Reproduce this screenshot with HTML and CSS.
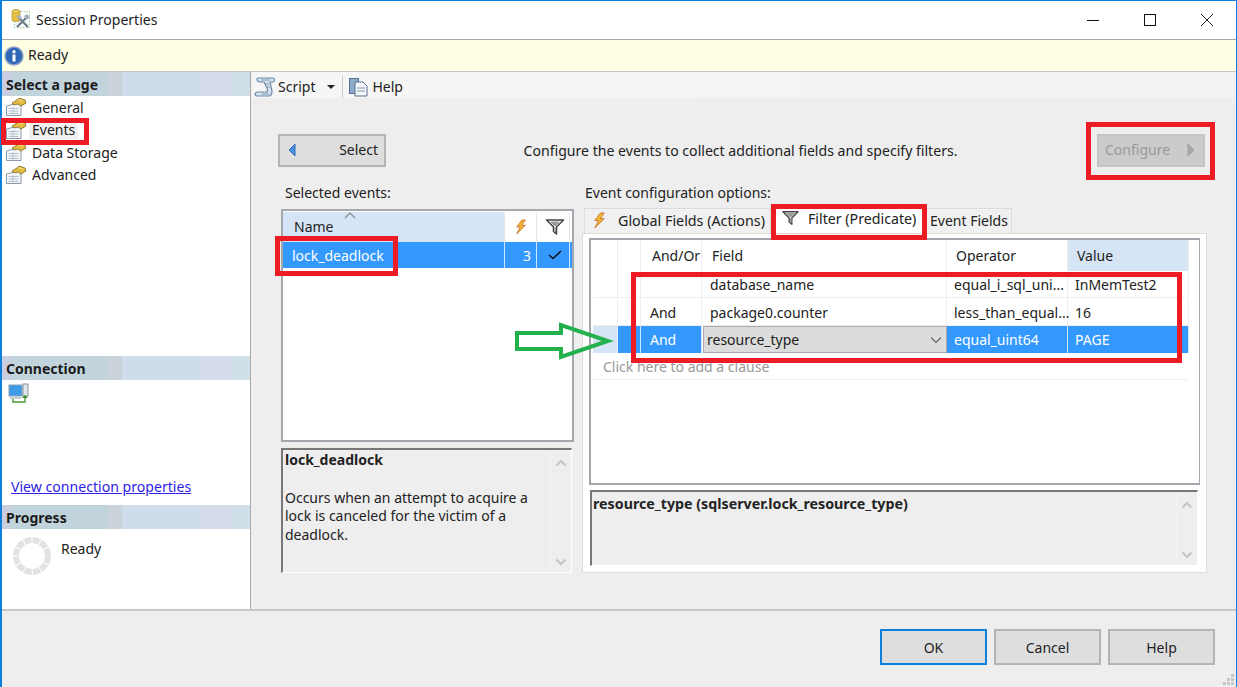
FILE: index.html
```html
<!DOCTYPE html>
<html lang="en">
<head>
<meta charset="utf-8">
<title>Session Properties</title>
<link rel="stylesheet" href="styles.css">
</head>
<body>
<svg class="defs" width="0" height="0" aria-hidden="true">
  <symbol id="page" viewBox="0 0 22 20">
    <path d="M1.500 9 L13 6 L16 9 V18.500 H1.500 Z" fill="#f3f6f9" stroke="#8a98a6"/>
    <path d="M3.500 11.500h10M3.500 14h10M3.500 16.500h10M8 10v7.500" stroke="#b4c0cc" fill="none"/>
    <path d="M7 6 L12 3 L14 1 L20 3 L21 6 L16 9 L13 7 L9 8 Z" fill="#e3bb3e" stroke="#7c6a2a" stroke-width=".8"/>
    <path d="M13 2.500 L18 4" stroke="#f7e38c"/>
  </symbol>
  <symbol id="bolt" viewBox="0 0 16 18">
    <path d="M9 1 L3 9 H7 L3 17 L13 7 H9 L13 1 Z" fill="#f2b632" stroke="#c9763a" stroke-width="1"/>
  </symbol>
  <symbol id="funnel" viewBox="0 0 20 18">
    <path d="M1.500 2 H18.500 L11.500 9 V16 L8.500 13.500 V9 Z" fill="#fff" stroke="#444" stroke-width="1.500" stroke-linejoin="round"/>
    <path d="M9.500 9 H11 V14.500 L9.500 13.500 Z M5 3.500 H15 L11 8 H9 Z" fill="#999"/>
  </symbol>
  <symbol id="chev-up" viewBox="0 0 12 8"><path d="M1.500 6.500 L6 2 L10.500 6.500" fill="none" stroke="#c4c4c4" stroke-width="2"/></symbol>
  <symbol id="chev-down" viewBox="0 0 12 8"><path d="M1.500 1.500 L6 6 L10.500 1.500" fill="none" stroke="#c4c4c4" stroke-width="2"/></symbol>
</svg>

<div class="window">
  <header class="titlebar">
    <svg class="app-icon" viewBox="0 0 20 20" width="20" height="20">
      <rect x="3.500" y="2.500" width="15" height="16" fill="none" stroke="#8fd08f" stroke-dasharray="1.500 1.500"/>
      <path d="M1 2 a4 1.500 0 0 1 8 0 V11 a4 1.500 0 0 1 -8 0 Z" fill="#e6bf45" stroke="#a68a2a" stroke-width=".6"/>
      <path d="M1 2 a4 1.500 0 0 0 8 0" fill="#f6e08a" stroke="#a68a2a" stroke-width=".5"/>
      <path d="M6 18 L15 9 M8 9 L17 18" stroke="#6f7f8f" stroke-width="2.400"/>
      <path d="M13 7 L16 5 L19 8 L16 11 Z M5 7 L8 6 L11 9 L9 11 Z" fill="#a3b0bd"/>
    </svg>
    <span class="title-text">Session Properties</span>
    <div class="window-controls">
      <svg width="14" height="14" viewBox="0 0 14 14"><path d="M1 7.500H13" stroke="#111" fill="none"/></svg>
      <svg width="14" height="14" viewBox="0 0 14 14"><rect x="1.500" y="1.500" width="11" height="11" fill="none" stroke="#111"/></svg>
      <svg width="14" height="14" viewBox="0 0 14 14"><path d="M1 1L13 13M13 1L1 13" stroke="#222" fill="none"/></svg>
    </div>
  </header>

  <div class="statusbar">
    <svg width="20" height="20" viewBox="0 0 20 20">
      <circle cx="10" cy="10" r="9" fill="#2f66b8" stroke="#8ea4c4" stroke-width="1.500"/>
      <rect x="8.500" y="8.500" width="3" height="7" fill="#fff"/>
      <circle cx="10" cy="5.800" r="1.700" fill="#fff"/>
    </svg>
    <span>Ready</span>
  </div>

  <div class="body">
    <aside class="sidebar">
      <section class="side-pages">
        <h2 class="side-head">Select a page</h2>
        <ul class="page-list">
          <li><svg class="page-icon"><use href="#page"/></svg><span>General</span></li>
          <li><svg class="page-icon"><use href="#page"/></svg><span class="current">Events</span></li>
          <li><svg class="page-icon"><use href="#page"/></svg><span>Data Storage</span></li>
          <li><svg class="page-icon"><use href="#page"/></svg><span>Advanced</span></li>
        </ul>
      </section>
      <section class="side-connection">
        <h2 class="side-head">Connection</h2>
        <div class="conn-body">
          <svg width="22" height="22" viewBox="0 0 22 22">
            <rect x="1" y="2" width="13" height="11" fill="#3d9be8" stroke="#8aa0b8"/>
            <rect x="15" y="1" width="5" height="12" fill="#dfe5ea" stroke="#8a949e"/>
            <rect x="2" y="13" width="11" height="3" fill="#c4ccd4"/>
            <path d="M5 16 V19 H17 V14" fill="none" stroke="#4b9a33" stroke-width="1.400"/>
            <path d="M14 15 L17 12 L20 15 Z" fill="#2f8a22"/>
          </svg>
          <a class="conn-link" href="#">View connection properties</a>
        </div>
      </section>
      <section class="side-progress">
        <h2 class="side-head">Progress</h2>
        <div class="progress-body">
          <svg width="38" height="38" viewBox="0 0 38 38"><circle cx="19" cy="19" r="16" fill="none" stroke="#e2e2e2" stroke-width="6" stroke-dasharray="7.300 1.080"/></svg>
          <span>Ready</span>
        </div>
      </section>
    </aside>

    <main class="main">
      <div class="toolbar">
        <svg width="22" height="21" viewBox="0 0 22 21">
          <path d="M4 2 H19 C21 2 21 5 19 6 H16 L18 15 C18 18 17 20 15 20 H3 C1 20 0 17 3 16 H13 C14 14 13 11 12 10 L10 6 H6 C3 6 2 2 4 2Z" fill="#d9e3ee" stroke="#6d89a8" stroke-width="1.200"/>
          <path d="M7 4H16M11 8H15M12 11H16M8 18H15" stroke="#7e97b0"/>
        </svg>
        <span class="tool-label">Script</span>
        <span class="caret"></span>
        <span class="tool-sep"></span>
        <svg width="21" height="21" viewBox="0 0 21 21">
          <rect x="1.500" y="2.500" width="9" height="15" fill="#8fa9c8" stroke="#55708e"/>
          <path d="M7 6 H15 L19 10 V20 H7 Z" fill="#f5f7fa" stroke="#55708e"/>
          <path d="M9 12h8M9 15h8" stroke="#7e97b0"/>
        </svg>
        <span class="tool-label tool-help">Help</span>
      </div>

      <div class="content">
        <div class="action-row">
          <button class="btn btn-wizard btn-back" type="button">
            <svg width="8" height="14" viewBox="0 0 8 14"><path d="M7 1 L1 7 L7 13 Z" fill="#4a90e2" stroke="#2c6fc0"/></svg>
            <span>Select</span>
          </button>
          <p class="action-text">Configure the events to collect additional fields and specify filters.</p>
          <button class="btn btn-wizard btn-next" type="button" disabled>
            <span>Configure</span>
            <svg width="8" height="14" viewBox="0 0 8 14"><path d="M1 1 L7 7 L1 13 Z" fill="#a8a8a8" stroke="#a0a0a0"/></svg>
          </button>
        </div>

        <div class="columns">
          <div class="col-left">
            <div class="col-label">Selected events:</div>
            <div class="event-list">
              <div class="event-row event-head">
                <div class="cell cell-name sorted">
                  <svg class="sort-mark" width="12" height="7" viewBox="0 0 12 7"><path d="M1 6 L6 1 L11 6" fill="none" stroke="#888" stroke-width="1.200"/></svg>
                  Name
                </div>
                <div class="cell cell-icon"><svg width="14" height="18"><use href="#bolt"/></svg></div>
                <div class="cell cell-icon cell-last"><svg width="20" height="18"><use href="#funnel"/></svg></div>
              </div>
              <div class="event-row event-selected">
                <div class="cell cell-name">lock_deadlock</div>
                <div class="cell cell-count">3</div>
                <div class="cell cell-icon cell-last"><svg width="14" height="10" viewBox="0 0 14 10"><path d="M1 5 L5 8.500 L13 1" fill="none" stroke="#111" stroke-width="1.500"/></svg></div>
              </div>
            </div>
            <div class="desc-box desc-left">
              <div class="desc-text">
                <strong>lock_deadlock</strong>
                <p>Occurs when an attempt to acquire a lock is canceled for the victim of a deadlock.</p>
              </div>
              <div class="desc-scroll">
                <svg width="12" height="8"><use href="#chev-up"/></svg>
                <svg width="12" height="8"><use href="#chev-down"/></svg>
              </div>
            </div>
          </div>

          <div class="col-right">
            <div class="col-label">Event configuration options:</div>
            <div class="tabs">
              <div class="tab tab-global"><svg width="15" height="17"><use href="#bolt"/></svg>Global Fields (Actions)</div>
              <div class="tab tab-active"><svg width="19" height="16"><use href="#funnel"/></svg>Filter (Predicate)</div>
              <div class="tab tab-plain">Event Fields</div>
            </div>
            <div class="tab-panel">
              <div class="grid-box">
                <div class="grid-row grid-head">
                  <div class="gc"></div><div class="gc"></div>
                  <div class="gc gc-andor">And/Or</div><div class="gc">Field</div><div class="gc gc-op">Operator</div><div class="gc gc-sorted">Value</div>
                </div>
                <div class="grid-row">
                  <div class="gc"></div><div class="gc"></div>
                  <div class="gc"></div><div class="gc gc-field">database_name</div><div class="gc gc-opv">equal_i_sql_uni...</div><div class="gc">InMemTest2</div>
                </div>
                <div class="grid-row grid-row-tall">
                  <div class="gc"></div><div class="gc"></div>
                  <div class="gc gc-and">And</div><div class="gc gc-field">package0.counter</div><div class="gc gc-opv">less_than_equal...</div><div class="gc">16</div>
                </div>
                <div class="grid-row grid-selected">
                  <div class="gc gc-rowmark"></div><div class="gc gc-sel"></div>
                  <div class="gc gc-sel gc-and">And</div>
                  <div class="gc gc-combo"><span>resource_type</span><svg width="12" height="8" viewBox="0 0 12 8"><path d="M1 1.500 L6 6.500 L11 1.500" fill="none" stroke="#666" stroke-width="1.200"/></svg></div>
                  <div class="gc gc-sel gc-opv">equal_uint64</div><div class="gc gc-sel">PAGE</div>
                </div>
                <div class="grid-add">Click here to add a clause</div>
              </div>
              <div class="desc-box desc-right">
                <div class="desc-text"><strong>resource_type (sqlserver.lock_resource_type)</strong></div>
                <div class="desc-scroll">
                  <svg width="12" height="8"><use href="#chev-up"/></svg>
                  <svg width="12" height="8"><use href="#chev-down"/></svg>
                </div>
              </div>
            </div>
          </div>
        </div>
      </div>
    </main>
  </div>

  <footer class="footer">
    <button class="btn btn-foot btn-default" type="button">OK</button>
    <button class="btn btn-foot" type="button">Cancel</button>
    <button class="btn btn-foot" type="button">Help</button>
    <svg class="grip" width="12" height="12" viewBox="0 0 12 12"><path d="M9 0h3v3H9zM5 4h3v3H5zM9 4h3v3H9zM1 8h3v3H1zM5 8h3v3H5zM9 8h3v3H9z" fill="#c6c6c6"/></svg>
  </footer>
</div>

<div class="mark mark-events"></div>
<div class="mark mark-event-row"></div>
<div class="mark mark-tab"></div>
<div class="mark mark-config"></div>
<div class="mark mark-rows"></div>
<svg class="green-arrow" width="100" height="38" viewBox="0 0 100 38">
  <path d="M3 11 H47 V3 L94 19 L47 35 V27 H3 Z" fill="none" stroke="#22b14c" stroke-width="4"/>
</svg>
</body>
</html>
```
FILE: styles.css
```css
* { box-sizing: border-box; }
html, body { margin: 0; padding: 0; }
body {
  width: 1237px; height: 687px; overflow: hidden; position: relative;
  font-family: "Noto Sans", sans-serif; font-size: 14px; color: #222; background: #eee;
}
.defs { position: absolute; }
.window {
  width: 1237px; height: 687px; display: flex; flex-direction: column; position: relative;
  border: 1px solid #0f7fdc; border-width: 1px 1px 0 2px; background: #eee;
}
.titlebar { height: 38px; flex: none; display: flex; align-items: center; padding: 0 0 2px 9px; background: #fff; }
.title-text { margin-left: 5px; font-size: 14px; color: #222; }
.window-controls { margin-left: auto; display: flex; gap: 43px; padding: 0 22px 0 0; position: relative; top: 1px; }
.statusbar {
  height: 33px; flex: none; display: flex; align-items: center; gap: 4px; padding: 0 0 2px 2px;
  background: #ffffe4; border-top: 1px solid #a8a8a8; border-bottom: 1px solid #c8c8c8;
}
.statusbar svg { position: relative; top: 1px; }
.body { height: 539px; flex: none; display: flex; border-bottom: 2px solid #c9c9c9; }
.sidebar {
  width: 249px; flex: none; background: #fff; border-right: 1px solid #a9a9a9;
  display: flex; flex-direction: column;
}
.side-head {
  margin: 0; height: 24px; padding: 1px 0 0 4px; font-size: 14px; font-weight: 700; line-height: 24px; color: #1c1c1c;
  background: linear-gradient(90deg, #c9cfe0 0 9px, #c1d4dc 9px 106px, #c9d3d9 106px 120px, #cedde9 120px 198px, #d6dcea 198px 230px, #d1e0e8 230px);
}
.side-pages { height: 284px; flex: none; }
.page-list { list-style: none; margin: 0; padding: 0 0 0 3px; }
.page-list li { height: 22.500px; display: flex; align-items: center; gap: 5px; }
.page-icon { width: 22px; height: 20px; }
.current { background: #f0f0f0; padding: 0 3px; margin-left: -3px; }
.side-connection { height: 149px; flex: none; }
.conn-body { height: 125px; position: relative; padding: 3px 0 0 6px; display: flex; flex-direction: column; }
.conn-link { margin-top: auto; margin-left: 3px; margin-bottom: 9px; color: #2f22e8; font-size: 14.100px; }
.side-progress { flex: 1; }
.progress-body { display: flex; gap: 10px; padding: 8px 0 0 11px; align-items: flex-start; }
.progress-body span { margin-top: 2px; }

.main { flex: 1; min-width: 0; display: flex; flex-direction: column; }
.toolbar {
  height: 26px; flex: none; display: flex; align-items: center; padding: 3px 0 0 2px; margin-left: 1px;
  background: linear-gradient(90deg, #f6f6f6, #f2f2f2);
}
.tool-label { margin-left: 2px; }
.tool-help { margin-left: 3px; }
.caret { width: 0; height: 0; margin-left: 12px; border: 4px solid transparent; border-top-color: #222; border-bottom: 0; }
.tool-sep { width: 1px; height: 22px; margin: 0 5px 0 7px; background: #ccc; }
.content { flex: 1; padding: 36px 0 0 27px; }
.action-row { display: flex; align-items: center; height: 33px; width: 927px; justify-content: space-between; }
.action-text { margin: 0 2px 0 0; font-size: 14.100px; }
.btn { font: inherit; color: #222; background: #dedede; border: 2px solid #b4b4b4; padding: 0; }
.btn-wizard { width: 108px; height: 33px; display: flex; align-items: center; justify-content: space-between; padding: 0 6px 2px 8px; }
.btn-next { background: #cbcbcb; border-color: #c4c4c4; color: #9a9a9a; padding: 0 8px 2px 6px; }
.columns { display: flex; margin-top: 16px; }
.col-left { width: 304px; flex: none; padding-left: 4px; }
.col-label { height: 26px; padding-left: 3px; line-height: 20px; }
.event-list { width: 293px; height: 233px; border: 2px solid #a4a8ae; background: #fff; padding: 1px 0 0 0; margin-left: -1px; }
.event-row { display: grid; grid-template-columns: 222px 32px 33px; }
.event-head { height: 30px; }
.cell { display: flex; align-items: center; border-right: 1px solid #e8e8e8; }
.cell-name { padding-left: 11px; }
.sorted { background: #d5e5f5; position: relative; padding-bottom: 2px; }
.sort-mark { position: absolute; left: 61px; top: 0; }
.cell-icon { justify-content: center; }
.cell-last { padding-left: 4px; }
.event-selected { height: 26px; background: #3399ff; color: #fff; }
.event-selected .cell { border-right: 1px solid #cfe5fb; }
.event-selected .cell-name { padding-left: 9px; }
.cell-count { justify-content: flex-end; padding-right: 5px; }

.desc-box {
  display: flex; background: #eee; border: 1px solid #fff; border-top: 2px solid #777; border-left: 2px solid #777;
}
.desc-left { width: 291px; height: 125px; margin: 6px 0 0 -1px; }
.desc-text { flex: 1; padding: 1px 2px; line-height: 18.700px; }
.desc-text strong { font-size: 14px; }
.desc-text p { margin: 19px 0 0; }
.desc-right .desc-text { padding: 3px 1px; }
.desc-right strong { font-size: 14.250px; }
.desc-scroll { width: 21px; flex: none; display: flex; flex-direction: column; justify-content: space-between; align-items: center; padding: 9px 0 6px; border-left: 1px solid #f4f4f4; }

.col-right { width: 629px; flex: none; }
.tabs { display: flex; height: 25px; align-items: flex-end; padding-left: 2px; margin-top: -1px; }
.tab {
  height: 25px; display: flex; align-items: center; padding: 0 5px 2px 7px; background: #f0f0f0;
  border: 1px solid #dcdcdc; border-bottom: 0;
}
.tab-global { width: 187px; gap: 11px; font-size: 14.300px; white-space: nowrap; }
.tab-active { background: #fff; width: 155px; height: 28px; gap: 8px; padding: 0 0 3px 9px; position: relative; z-index: 1; font-size: 14.200px; white-space: nowrap; }
.tab-plain { padding: 0 3px 2px 3px; white-space: nowrap; }
.tab-panel { width: 625px; height: 340px; background: #fff; border: 1px solid #dcdcdc; padding: 4px 0 0 6px; }
.grid-box { width: 611px; height: 247px; border: 2px solid #a4a8ae; border-right-width: 1px; padding: 0 0 0 2px; }
.grid-row { display: grid; grid-template-columns: 25px 23px 61px 245px 121px 121px; height: 27px; margin-right: 11px; border-bottom: 1px solid #eee; }
.grid-row-tall { height: 28px; padding-top: 1px; }
.gc { display: flex; align-items: center; border-right: 1px solid #eee; padding-left: 7px; white-space: nowrap; }
.grid-head { height: 31px; border-bottom: 0; }
.gc-andor { padding-left: 11px; }
.grid-head .gc:nth-child(4) { padding-left: 10px; }
.gc-op { padding-left: 9px; }
.gc-sorted { background: #d5e5f5; padding-left: 9px; }
.gc-field { padding-left: 8px; }
.gc-opv { padding-left: 7px; }
.gc-and { padding-left: 9px; }
.grid-selected { border-bottom: 0; }
.gc-rowmark { background: #d5e5f5; }
.gc-sel { background: #3399ff; color: #fff; border-right: 1px solid #cfe5fb; }
.gc-combo { background: #dcdcdc; border: 1px solid #aaa; justify-content: space-between; padding: 0 4px 0 3px; margin-left: 1px; }
.grid-add { height: 27px; margin-right: 11px; padding: 1px 0 0 10px; display: flex; align-items: center; color: #999; border-bottom: 1px solid #eee; }
.desc-right { width: 608px; height: 76px; margin: 5px 0 0 1px; }

.footer { flex: 1; display: flex; justify-content: flex-end; align-items: flex-start; gap: 7px; padding: 18px 21px 0 0; }
.btn-foot { width: 107px; height: 36px; }
.btn-default { border-color: #0f7fdc; }
.grip { position: absolute; right: 2px; bottom: 1px; }

.mark { position: absolute; border: 5px solid #ed1c24; pointer-events: none; z-index: 2; }
.mark-events { left: 1px; top: 118px; width: 88px; height: 27px; }
.mark-event-row { left: 275px; top: 236px; width: 123px; height: 40px; }
.mark-tab { left: 771px; top: 204px; width: 156px; height: 36px; }
.mark-config { left: 1086px; top: 122px; width: 129px; height: 58px; }
.mark-rows { left: 631px; top: 272px; width: 551px; height: 91px; }
.green-arrow { position: absolute; left: 514px; top: 322px; z-index: 2; }
```
